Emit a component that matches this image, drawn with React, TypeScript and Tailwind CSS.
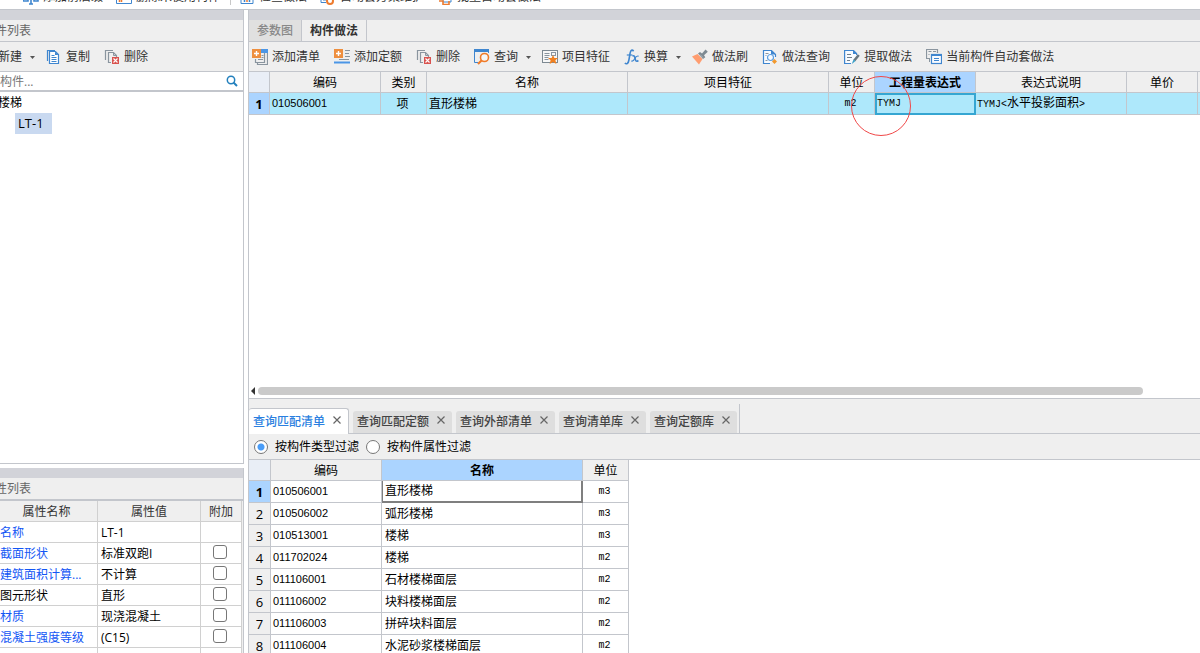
import type { ReactNode } from "react";

const FONT = "font-['Open_Sans','Noto_Sans_CJK_SC',sans-serif]";

function Icon({ children }: { children: ReactNode }) {
  return (
    <svg width="16" height="16" viewBox="0 0 16 16" fill="none" className="shrink-0" aria-hidden="true">
      {children}
    </svg>
  );
}

const NewIcon = () => (
  <Icon>
    <path d="M3 1.5h7l3 3v10H3z" stroke="#3f86cf" />
  </Icon>
);

const CopyIcon = () => (
  <Icon>
    <path d="M1.500 12V1.500H9" stroke="#3f86cf" strokeWidth="1.200" />
    <path d="M3.500 2.500h6l3 3v9h-9z" stroke="#3f86cf" strokeWidth="1.200" fill="#fff" />
    <path d="M9 2.500v3.500h3.500z" fill="#3f86cf" />
    <path d="M5.500 6.500h3M5.500 8.500h5M5.500 10.500h5M5.500 12.500h5" stroke="#3f86cf" />
  </Icon>
);

const DeleteIcon = () => (
  <Icon>
    <path d="M1.500 11V1.500H9" stroke="#8a959f" strokeWidth="1.200" />
    <path d="M7 13.500H4.500v-10h5l3 3V8" stroke="#8a959f" strokeWidth="1.200" />
    <path d="M9.500 3.500v3h3" stroke="#8a959f" />
    <rect x="8" y="8" width="7" height="7" fill="#d9534f" />
    <path d="M9.500 9.500l4 4m0-4l-4 4" stroke="#fff" strokeWidth="1.100" />
  </Icon>
);

const AddListIcon = () => (
  <Icon>
    <path d="M3.500 10v3.500h9V4M5.500 13v2.500h10V4" stroke="#8a959f" strokeWidth="1.200" />
    <path d="M9.500 6.500h2M9.500 8.500h2M6 10.500h5" stroke="#8a959f" />
    <rect x="9" y="0" width="7" height="4" fill="#4b96e6" />
    <rect width="9" height="9" fill="#ee8f3f" />
    <path d="M4.500 2v5M2 4.500h5" stroke="#fff" strokeWidth="1.400" />
  </Icon>
);

const AddQuotaIcon = () => (
  <Icon>
    <rect width="9" height="9" fill="#ee8f3f" />
    <path d="M4.500 2v5M2 4.500h5" stroke="#fff" strokeWidth="1.400" />
    <path d="M11 1.500h5M11 4.500h4M11 7.500h5M5 10.500h10" stroke="#8a959f" />
    <path d="M0 13.500h16" stroke="#4b96e6" strokeWidth="2" />
  </Icon>
);

const QueryIcon = () => (
  <Icon>
    <path d="M4 13.500H.5V2h14v2" stroke="#3f86cf" />
    <path d="M0 1.500h15" stroke="#3f86cf" strokeWidth="3" />
    <circle cx="10.500" cy="8.500" r="4" stroke="#f07b28" strokeWidth="1.600" fill="#f6f6f6" />
    <path d="M7.500 11.500L4 15" stroke="#f07b28" strokeWidth="2.200" />
  </Icon>
);

const FeatureIcon = () => (
  <Icon>
    <rect x=".5" y="1.500" width="15" height="12" stroke="#7d8992" fill="#f7f7f7" />
    <path d="M2.500 4.500h5M2.500 6.500h5M2.500 8.500h4M2.500 10.500h4" stroke="#8a959f" />
    <rect x="9.500" y="3.500" width="4" height="3" stroke="#8a959f" />
    <path d="M11 6l1.400 3H16l-2.600 2.300 1 3.700L11 13l-3.400 2 1-3.700L6 9h3.600z" fill="#f08020" />
  </Icon>
);

const FxIcon = () => (
  <Icon>
    <path d="M9.600 2.200C8.200.2 6.700 1 6.100 4.200L4.900 11C4.400 14.200 2.800 15.700.8 14.200" stroke="#3f86cf" strokeWidth="1.600" />
    <path d="M2.800 6h5.600" stroke="#3f86cf" strokeWidth="1.200" />
    <path d="M8.400 7c1.700-.8 2.300.2 2.700 2.300.5 2.500.9 3.900 3.300 2.200" stroke="#3f86cf" strokeWidth="1.600" />
    <path d="M14.700 7.200c-2.200-.9-3 .8-3.900 2.400-.9 1.700-1.500 3-3.400 2.300" stroke="#3f86cf" strokeWidth="1.200" />
  </Icon>
);

const BrushIcon = () => (
  <Icon>
    <path d="M0 7.500L5.500 5l5 5L7 15.500z" fill="#ff9d70" />
    <path d="M6 4.500L8 3l2 1.500L13.500.5 15.800 2.800 12 6.300l1.300 2L11 10z" fill="#7e8a92" />
    <path d="M8 5.500l3 3" stroke="#aab3b9" />
  </Icon>
);

const MethodQueryIcon = () => (
  <Icon>
    <path d="M8 14.500H1.500V1.500h8l4 4V8" stroke="#3f86cf" strokeWidth="1.200" fill="#f8fbff" />
    <path d="M9 1v4.500h5z" fill="#3f86cf" />
    <path d="M3.500 4.500h3M3.500 6.500h1M3.500 11.500h2" stroke="#8a959f" />
    <circle cx="8.500" cy="8.500" r="3" stroke="#5c9fe0" strokeWidth="1.200" />
    <path d="M12.500 10l2.500 2.500-2.500 2.500-2.500-2.500z" fill="#f2992e" />
  </Icon>
);

const ExtractIcon = () => (
  <Icon>
    <path d="M7 14.500H.6V1.500h9l3 3V6" stroke="#3f86cf" strokeWidth="1.200" fill="#f8fbff" />
    <path d="M9 1v4h4z" fill="#3f86cf" />
    <path d="M3 5.500h4M3 8.500h5M3 11.500h3" stroke="#71808c" />
    <path d="M14.800 6l-4.500 5.500" stroke="#67757f" strokeWidth="2.500" />
    <path d="M9.500 10.500l2 1.500L7.800 15z" fill="#3aa0c8" />
  </Icon>
);

const AutoIcon = () => (
  <Icon>
    <path d="M3 9.500H.5v-9h11V4" stroke="#8a959f" strokeWidth="1.200" />
    <path d="M2.500 2.500h3M7 2.500h3M2.500 5.500h1M3.500 9v4" stroke="#8a959f" />
    <rect x="5.500" y="5.500" width="10" height="9" fill="#f8fbff" stroke="#3f86cf" strokeWidth="1.200" />
    <path d="M5 6h11" stroke="#3f86cf" strokeWidth="2" />
    <path d="M8 9.500h5M8 11.500h5" stroke="#3f86cf" />
  </Icon>
);

const RibbonText = () => (
  <Icon>
    <path d="M0 12h5V8H1zM11 8h4v4h-4zM6 15h4M8 6v9" stroke="#3f86cf" strokeWidth="1.600" />
  </Icon>
);

const RibbonPanel = () => (
  <Icon>
    <path d="M.5 4h15v10.500H.5z" stroke="#3f86cf" fill="#fff" />
    <path d="M3.500 9v4M5.500 11v2" stroke="#ed7b2f" strokeWidth="1.500" />
  </Icon>
);

const RibbonChart = () => (
  <Icon>
    <path d="M2 4h12v10.500H2z" stroke="#3f86cf" fill="#fff" />
    <path d="M5.500 9v4M10.500 9v4" stroke="#3f86cf" strokeWidth="1.500" />
    <path d="M8 10v3" stroke="#ed7b2f" strokeWidth="1.500" />
  </Icon>
);

const RibbonGear = () => (
  <Icon>
    <path d="M6 13.500H1V5h12v4" stroke="#3f86cf" fill="#fff" />
    <circle cx="10" cy="12" r="3" stroke="#ed7b2f" strokeWidth="2" />
    <path d="M3 11h3" stroke="#3f86cf" />
  </Icon>
);

const RibbonBatch = () => (
  <Icon>
    <path d="M6 6h8v7H6z" stroke="#3f86cf" fill="#fff" />
    <path d="M2 8h3M2 12h4v3.500h6V12" stroke="#ed7b2f" strokeWidth="1.600" />
  </Icon>
);

const Caret = () => (
  <svg width="5" height="3" viewBox="0 0 5 3" aria-hidden="true" className="shrink-0">
    <path d="M0 0h5L2.500 3z" fill="#555" />
  </svg>
);

function Tool({ icon, label, caret }: { icon: ReactNode; label: string; caret?: boolean }) {
  return (
    <button
      type="button"
      className={`flex shrink-0 items-center gap-1 whitespace-nowrap text-[#333] ${caret ? "-mr-[3px]" : ""}`}
    >
      {icon}
      <span>{label}</span>
      {caret && (
        <span className="flex h-4 items-center pt-px pl-1">
          <Caret />
        </span>
      )}
    </button>
  );
}

function Ribbon() {
  const item = "flex shrink-0 items-center gap-1 whitespace-nowrap";
  return (
    <header className="flex h-[10px] shrink-0 items-end overflow-hidden border-b border-[#c3c6cc] bg-white pb-1 leading-4 text-[#333]">
      <button type="button" className={`${item} ml-[23px]`}>
        <RibbonText />添加前后缀
      </button>
      <button type="button" className={`${item} ml-[13px]`}>
        <RibbonPanel />删除未使用构件
      </button>
      <span className="ml-[10px] h-4 w-px shrink-0 bg-[#c8c8c8]" />
      <button type="button" className={`${item} ml-2`}>
        <RibbonChart />检查做法
      </button>
      <button type="button" className={`${item} ml-[13px]`}>
        <RibbonGear />自动套方案维护
      </button>
      <button type="button" className={`${item} ml-[13px]`}>
        <RibbonBatch />批量自动套做法
      </button>
    </header>
  );
}

const properties = [
  { name: "名称", value: "LT-1", link: true, extra: false },
  { name: "截面形状", value: "标准双跑I", link: true, extra: true },
  { name: "建筑面积计算...", value: "不计算", link: true, extra: true },
  { name: "图元形状", value: "直形", link: false, extra: true },
  { name: "材质", value: "现浇混凝土", link: true, extra: true },
  { name: "混凝土强度等级", value: "(C15)", link: true, extra: true },
  { name: "", value: "", link: false, extra: false },
];

function LeftPanel() {
  const th = "border-r border-b border-[#d0d0d0] px-0 pt-[2px] pb-0 font-normal";
  const td = "border-r border-b border-[#d0d0d0] py-0 pt-[2px]";
  return (
    <aside className="-ml-6 flex w-[268px] shrink-0 flex-col">
      <section className="flex h-[454px] shrink-0 flex-col border-r border-b border-[#c3c6cc] bg-white">
        <div className="h-[10px] shrink-0 bg-[#d2d3d9]" />
        <h2 className="flex h-[22px] shrink-0 items-center border-b border-[#c3c6cc] bg-[#efefef] pl-[7px] text-[#666]">构件列表</h2>
        <div className="flex h-[30px] shrink-0 items-center gap-[14px] border-b border-[#c3c6cc] bg-[#efefef] pl-[2px]">
          <Tool icon={<NewIcon />} label="新建" caret />
          <Tool icon={<CopyIcon />} label="复制" />
          <Tool icon={<DeleteIcon />} label="删除" />
        </div>
        <label className="flex h-5 shrink-0 items-center border-b-2 border-[#c3c6cc] pr-[5px]">
          <input aria-label="搜索构件" placeholder="搜索构件..." className="min-w-0 flex-1 bg-transparent pt-px outline-none placeholder:text-[#777]" />
          <svg width="12" height="12" viewBox="0 0 12 12" fill="none" aria-hidden="true">
            <circle cx="5" cy="5" r="3.700" stroke="#2380bd" strokeWidth="1.500" />
            <path d="M7.500 7.500l3.500 3.500" stroke="#2380bd" strokeWidth="2" />
          </svg>
        </label>
        <ul className="leading-[21px] text-black">
          <li className="pl-[22px]">
            楼梯
            <ul>
              <li className="ml-[17px] w-[37px] bg-[#c9d9f0] pl-[3px] text-[13px]">LT-1</li>
            </ul>
          </li>
        </ul>
      </section>
      <section className="mt-1 flex min-h-0 flex-1 flex-col border-r border-[#c3c6cc] bg-[#efefef]">
        <div className="h-[10px] shrink-0 bg-[#d2d3d9]" />
        <h2 className="flex h-[23px] shrink-0 items-center border-b-2 border-[#c3c6cc] pl-[7px] text-[#666]">属性列表</h2>
        <table className="w-[266px] table-fixed border-separate border-spacing-0 bg-white">
          <colgroup>
            <col className="w-[122px]" />
            <col className="w-[103px]" />
            <col className="w-[41px]" />
          </colgroup>
          <thead>
            <tr className="h-[21px] bg-[#efefef] text-[#333]">
              <th className={`${th} pl-5`}>属性名称</th>
              <th className={th}>属性值</th>
              <th className={th}>附加</th>
            </tr>
          </thead>
          <tbody>
            {properties.map((p, i) => (
              <tr key={i} className="h-[21px]">
                <td className={`${td} pl-6 whitespace-nowrap ${p.link ? "text-[#1256f5]" : "text-black"}`}>{p.name}</td>
                <td className={`${td} pl-[3px] text-black`}>{p.value}</td>
                <td className="border-r border-b border-[#d0d0d0] pr-[2px] pb-[2px]">
                  {p.extra && (
                    <input
                      type="checkbox"
                      aria-label={`附加 ${p.name}`}
                      className="mx-auto block size-[14px] appearance-none rounded-[3px] border border-[#777] bg-white checked:bg-[#3f86cf]"
                    />
                  )}
                </td>
              </tr>
            ))}
          </tbody>
        </table>
      </section>
    </aside>
  );
}

const mono = "font-['Liberation_Mono',monospace] text-[10px]";
const code = "font-['Liberation_Sans',sans-serif] text-[11px]";

function MethodTable() {
  const th = "border-r border-b border-[#c3c6cc] pt-[2px] font-normal";
  const td = "border-r border-b border-[#c3c6cc]";
  return (
    <table className="w-full table-fixed border-separate border-spacing-0 text-black">
      <colgroup>
        <col className="w-[21px]" />
        <col className="w-[111px]" />
        <col className="w-[46px]" />
        <col className="w-[201px]" />
        <col className="w-[201px]" />
        <col className="w-[46px]" />
        <col className="w-[101px]" />
        <col className="w-[151px]" />
        <col className="w-[71px]" />
        <col />
      </colgroup>
      <thead>
        <tr className="h-[21px] bg-[#efefef]">
          <th className={`${th} bg-[#e9eef6]`} />
          <th className={th}>编码</th>
          <th className={th}>类别</th>
          <th className={th}>名称</th>
          <th className={th}>项目特征</th>
          <th className={th}>单位</th>
          <th className="border-r border-b border-[#c3c6cc] bg-[#abd4ff] pt-[2px] font-bold">工程量表达式</th>
          <th className={th}>表达式说明</th>
          <th className={th}>单价</th>
          <th className="border-b border-[#c3c6cc] p-0" />
        </tr>
      </thead>
      <tbody>
        <tr className="h-[22px] bg-[#aee8fb]">
          <th className={`${td} bg-[#abd4ff] text-[13px] font-bold`}>1</th>
          <td className={`${td} ${code} pb-[2px] pl-[2px]`}>010506001</td>
          <td className={`${td} pr-[2px] text-center`}>项</td>
          <td className={`${td} pl-[2px]`}>直形楼梯</td>
          <td className={td} />
          <td className={`${td} ${mono} pr-[2px] text-center`}>m2</td>
          <td className={`${mono} border-2 border-[#35a6d2]`}>TYMJ</td>
          <td className={`${td} pl-px whitespace-nowrap`}>
            <span className={mono}>TYMJ&lt;</span>水平投影面积<span className={mono}>&gt;</span>
          </td>
          <td className={td} />
          <td className="border-b border-[#c3c6cc] p-0" />
        </tr>
      </tbody>
    </table>
  );
}

const matches = [
  ["010506001", "直形楼梯", "m3"],
  ["010506002", "弧形楼梯", "m3"],
  ["010513001", "楼梯", "m3"],
  ["011702024", "楼梯", "m2"],
  ["011106001", "石材楼梯面层", "m2"],
  ["011106002", "块料楼梯面层", "m2"],
  ["011106003", "拼碎块料面层", "m2"],
  ["011106004", "水泥砂浆楼梯面层", "m2"],
];

function MatchTable() {
  const th = "border-r border-b border-[#c3c6cc] pt-[2px] font-normal";
  const td = "border-r border-b border-[#c3c6cc]";
  return (
    <table className="w-[380px] table-fixed border-separate border-spacing-0 text-black">
      <colgroup>
        <col className="w-[22px]" />
        <col className="w-[111px]" />
        <col className="w-[201px]" />
        <col className="w-[46px]" />
      </colgroup>
      <thead>
        <tr className="h-[21px] bg-[#efefef]">
          <th className={`${th} bg-[#e9eef6]`} />
          <th className={th}>编码</th>
          <th className="border-r border-b border-[#c3c6cc] bg-[#abd4ff] pt-[2px] font-bold">名称</th>
          <th className={th}>单位</th>
        </tr>
      </thead>
      <tbody>
        {matches.map(([id, name, unit], i) => (
          <tr key={id} className="h-[22px]">
            <th className={`${td} text-[13px] ${i === 0 ? "bg-[#abd4ff] font-bold" : "bg-[#efefef] font-normal"}`}>{i + 1}</th>
            <td className={`${td} ${code} pb-[2px] pl-[2px]`}>{id}</td>
            <td className={i === 0 ? "border-r-2 border-b-2 border-l border-[#7f7f7f] pl-[2px]" : `${td} pl-[3px]`}>{name}</td>
            <td className={`${td} ${mono} pr-[2px] text-center`}>{unit}</td>
          </tr>
        ))}
      </tbody>
    </table>
  );
}

const queryTabs = ["查询匹配清单", "查询匹配定额", "查询外部清单", "查询清单库", "查询定额库"];

function QueryTabs() {
  return (
    <div className="flex h-[35px] shrink-0 border-b border-[#c3c6cc] pt-[5px]">
      <div className="flex items-end gap-1 border-r border-[#c3c6cc] pr-[2px]">
        {queryTabs.map((tab, i) => (
          <div
            key={tab}
            className={
              i === 0
                ? "-mb-px flex h-[26px] items-center gap-2 rounded-t-[3px] border-t border-r border-[#c3c6cc] bg-white pr-[7px] pl-1 text-[#2b7fe0]"
                : "flex h-[22px] items-center gap-2 rounded-t-[3px] bg-[#dedede] pr-[7px] pl-1 text-[#444]"
            }
          >
            <button type="button" className="font-medium whitespace-nowrap">
              {tab}
            </button>
            <button type="button" aria-label={`关闭 ${tab}`} className="pb-1">
              <svg width="8" height="8" viewBox="0 0 8 8" aria-hidden="true">
                <path d="M.5.5l7 7m0-7l-7 7" stroke="#666" strokeWidth="1.200" />
              </svg>
            </button>
          </div>
        ))}
      </div>
    </div>
  );
}

function FilterOption({ label, checked }: { label: string; checked?: boolean }) {
  return (
    <label className="flex items-center gap-[7px] text-black">
      <input
        type="radio"
        name="filter"
        defaultChecked={checked}
        className="size-[14px] appearance-none rounded-full border border-[#777] bg-white checked:border-[#777] checked:bg-[radial-gradient(circle,#4a9df8_3px,#fff_4px)]"
      />
      {label}
    </label>
  );
}

export default function App() {
  return (
    <div className={`flex h-screen flex-col overflow-hidden bg-white text-[12px] leading-4 ${FONT}`}>
      <Ribbon />
      <div className="flex min-h-0 flex-1">
        <LeftPanel />
        <main className="ml-1 flex min-w-0 flex-1 flex-col overflow-hidden border-l border-[#c3c6cc]">
          <div className="h-[10px] shrink-0 bg-[#d2d3d9]" />
          <div className="flex h-[22px] shrink-0 border-b border-[#c3c6cc] bg-[#efefef]">
            <button type="button" className="border-r border-[#c3c6cc] bg-[#e0e0e0] px-2 font-medium text-[#888]">参数图</button>
            <button type="button" className="border-r border-[#c3c6cc] px-2 font-bold text-[#333]">构件做法</button>
          </div>
          <div className="flex h-[30px] shrink-0 items-center gap-[14px] border-b border-[#c3c6cc] bg-[#efefef] pl-[3px]">
            <Tool icon={<AddListIcon />} label="添加清单" />
            <Tool icon={<AddQuotaIcon />} label="添加定额" />
            <Tool icon={<DeleteIcon />} label="删除" />
            <Tool icon={<QueryIcon />} label="查询" caret />
            <Tool icon={<FeatureIcon />} label="项目特征" />
            <Tool icon={<FxIcon />} label="换算" caret />
            <Tool icon={<BrushIcon />} label="做法刷" />
            <Tool icon={<MethodQueryIcon />} label="做法查询" />
            <Tool icon={<ExtractIcon />} label="提取做法" />
            <Tool icon={<AutoIcon />} label="当前构件自动套做法" />
          </div>
          <div className="relative flex h-[327px] shrink-0 flex-col border-b border-[#c3c6cc]">
            <MethodTable />
            <svg width="62" height="62" viewBox="0 0 62 62" fill="none" className="pointer-events-none absolute top-[3px] left-[601px]" aria-hidden="true">
              <circle cx="31" cy="31" r="29.500" stroke="#f04848" />
            </svg>
            <div className="mt-auto mb-[3px] flex items-center gap-[3px] pl-[2px]">
              <svg width="4" height="8" viewBox="0 0 4 8" aria-hidden="true">
                <path d="M4 0v8L0 4z" fill="#333" />
              </svg>
              <div className="mr-[57px] h-2 flex-1 rounded-full bg-[#cacaca]" />
            </div>
          </div>
          <div className="flex shrink-0 flex-col bg-[#efefef]">
            <QueryTabs />
            <div className="flex h-[26px] items-center gap-[7px] border-b border-[#c3c6cc] pl-[5px]">
              <FilterOption label="按构件类型过滤" checked />
              <FilterOption label="按构件属性过滤" />
            </div>
          </div>
          <MatchTable />
        </main>
      </div>
    </div>
  );
}
